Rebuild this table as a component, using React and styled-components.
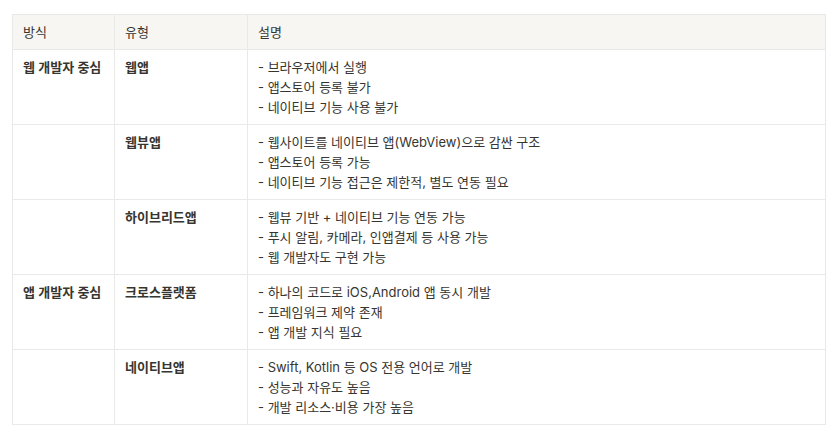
import React from 'react';
import styled, { createGlobalStyle } from 'styled-components';

const rows = [
  {
    group: '웹 개발자 중심',
    type: '웹앱',
    notes: ['브라우저에서 실행', '앱스토어 등록 불가', '네이티브 기능 사용 불가'],
  },
  {
    group: '',
    type: '웹뷰앱',
    notes: ['웹사이트를 네이티브 앱(WebView)으로 감싼 구조', '앱스토어 등록 가능', '네이티브 기능 접근은 제한적, 별도 연동 필요'],
  },
  {
    group: '',
    type: '하이브리드앱',
    notes: ['웹뷰 기반 + 네이티브 기능 연동 가능', '푸시 알림, 카메라, 인앱결제 등 사용 가능', '웹 개발자도 구현 가능'],
  },
  {
    group: '앱 개발자 중심',
    type: '크로스플랫폼',
    notes: ['하나의 코드로 iOS,Android 앱 동시 개발', '프레임워크 제약 존재', '앱 개발 지식 필요'],
  },
  {
    group: '',
    type: '네이티브앱',
    notes: ['Swift, Kotlin 등 OS 전용 언어로 개발', '성능과 자유도 높음', '개발 리소스·비용 가장 높음'],
  },
];

const App = () => (
  <>
    <GlobalStyle />
    <Page>
      <Table>
        <colgroup>
          <col style={{ width: 102 }} />
          <col style={{ width: 133 }} />
          <col />
        </colgroup>
        <thead>
          <tr>
            <HeadCell>방식</HeadCell>
            <HeadCell>유형</HeadCell>
            <HeadCell>설명</HeadCell>
          </tr>
        </thead>
        <tbody>
          {rows.map((row) => (
            <tr key={row.type}>
              <Cell bold>{row.group}</Cell>
              <Cell bold>{row.type}</Cell>
              <Cell>
                {row.notes.map((note) => (
                  <Line key={note}>- {note}</Line>
                ))}
              </Cell>
            </tr>
          ))}
        </tbody>
      </Table>
    </Page>
  </>
);

export default App;

// Styled components
const GlobalStyle = createGlobalStyle`
  body {
    margin: 0;
    background: #ffffff;
    font-family: Inter, 'Noto Sans CJK KR', sans-serif;
    color: #37352f;
  }
`;

const Page = styled.div`
  width: 840px;
  height: 439px;
  padding: 14px 14px 0 12px;
  box-sizing: border-box;
`;

const Table = styled.table`
  width: 814px;
  border-collapse: collapse;
  table-layout: fixed;
  font-size: 13px;
  line-height: 20px;
`;

const HeadCell = styled.th`
  height: 35px;
  padding: 0 10px;
  box-sizing: border-box;
  background: #f7f6f3;
  border: 1px solid #e9e9e7;
  text-align: left;
  font-weight: 400;
  color: #37352f;
  vertical-align: middle;
`;

const Cell = styled.td`
  height: 75px;
  padding: 7px 10px 0 10px;
  box-sizing: border-box;
  border: 1px solid #e9e9e7;
  vertical-align: top;
  font-weight: ${(p) => (p.bold ? 600 : 400)};
`;

const Line = styled.div`
  white-space: nowrap;
`;
